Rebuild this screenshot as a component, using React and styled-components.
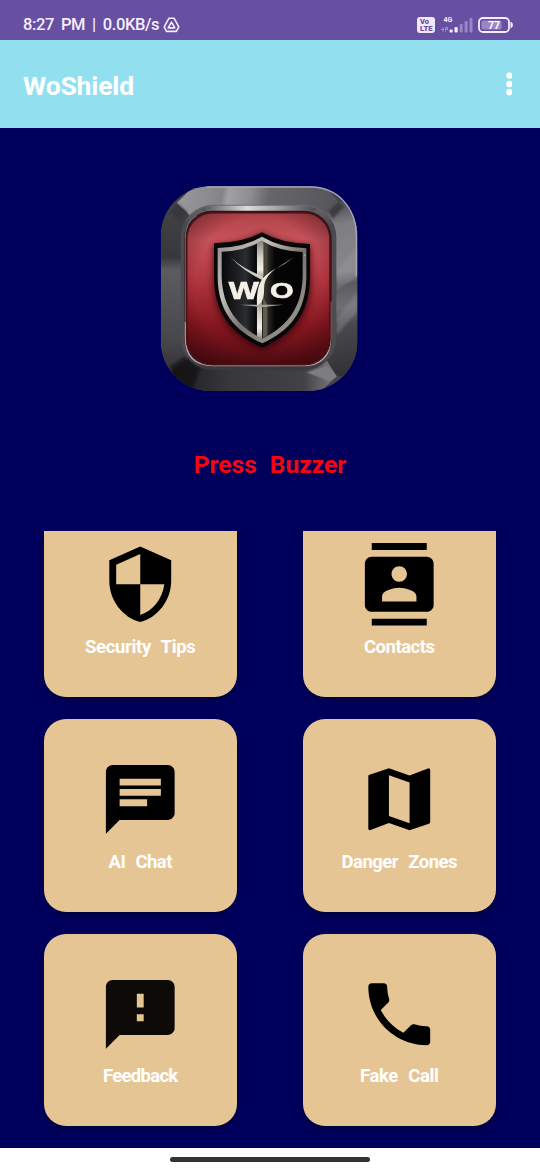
import React from 'react';
import styled, { createGlobalStyle } from 'styled-components';
import { MdSecurity, MdContacts, MdChat, MdMap, MdFeedback, MdPhone } from 'react-icons/md';

const GlobalStyle = createGlobalStyle`
  * { box-sizing: border-box; }
  body { margin: 0; font-family: Roboto, "Liberation Sans", sans-serif; }
`;

const Screen = styled.div`
  width: 540px;
  height: 1170px;
  display: flex;
  flex-direction: column;
  background: #00005c;
  overflow: hidden;
`;

const StatusBar = styled.div`
  flex: none;
  height: 40px;
  padding: 10px 27px 0 23px;
  display: flex;
  align-items: center;
  justify-content: space-between;
  background: #6750a2;
  color: #f5edff;
`;

const StatusGroup = styled.div`
  display: flex;
  align-items: center;
  gap: ${(p) => p.$gap}px;
`;

const StatusText = styled.span`
  font-size: 16.5px;
  font-weight: 500;
  line-height: 20px;
  letter-spacing: -0.4px;
  word-spacing: 3.3px;
  white-space: nowrap;
`;

const AppBar = styled.header`
  flex: none;
  height: 88px;
  padding: 3px 28px 0 23px;
  display: flex;
  align-items: center;
  justify-content: space-between;
  background: #92e0ef;
  color: #fff;
`;

const Title = styled.h1`
  margin: 0;
  font-size: 26.5px;
  font-weight: 700;
  line-height: 32px;
  letter-spacing: -0.15px;
`;

const MenuButton = styled.button`
  width: 6px;
  height: 24px;
  margin-bottom: 4px;
  padding: 0;
  border: 0;
  background: none;
  display: flex;
  svg { display: block; }
`;

const Buzzer = styled.section`
  flex: none;
  height: 403px;
  padding-top: 47px;
  display: flex;
  flex-direction: column;
  align-items: center;
`;

const BuzzerButton = styled.button`
  width: 220px;
  height: 225px;
  margin: 0 20px 0 0;
  padding: 0;
  border: 0;
  background: none;
  svg { display: block; }
`;

const BuzzerLabel = styled.p`
  margin: 50px 0 0;
  color: #f60410;
  font-size: 24.5px;
  font-weight: 700;
  line-height: 30px;
  word-spacing: 7px;
`;

const List = styled.main`
  flex: 1;
  min-height: 0;
  overflow: hidden;
  padding: 0 44px;
`;

const Grid = styled.div`
  margin-top: -26.75px;
  display: grid;
  grid-template-columns: repeat(2, 192.5px);
  column-gap: 66.5px;
  row-gap: 22.25px;
`;

const Card = styled.button`
  height: 192.5px;
  padding: 39px 0 0;
  border: 0;
  border-radius: 22px;
  display: flex;
  flex-direction: column;
  align-items: center;
  gap: 9px;
  background: #e6c594;
  box-shadow: 0 3px 5px rgba(0, 0, 20, 0.4);
  color: ${(p) => p.$tone};
  font-family: inherit;
  svg { display: block; flex: none; }
`;

const CardLabel = styled.span`
  color: #fff;
  font-size: 18.5px;
  font-weight: 700;
  line-height: 24px;
  letter-spacing: ${(p) => p.$tracking}px;
  word-spacing: 6px;
  white-space: nowrap;
`;

const NavBar = styled.footer`
  flex: none;
  height: 22px;
  background: #fff;
  display: flex;
  justify-content: center;
  align-items: center;
`;

const NavHandle = styled.div`
  width: 200px;
  height: 5px;
  border-radius: 3px;
  background: #333;
`;

const items = [
  { label: 'Security Tips', Icon: MdSecurity, tracking: -0.35 },
  { label: 'Contacts', Icon: MdContacts, tracking: -0.5 },
  { label: 'AI Chat', Icon: MdChat, tracking: -0.5 },
  { label: 'Danger Zones', Icon: MdMap, tracking: -0.5 },
  { label: 'Feedback', Icon: MdFeedback, tracking: -0.7, tone: '#0d0a08' },
  { label: 'Fake Call', Icon: MdPhone, tracking: -0.35 },
];

const DriveIcon = () => (
  <svg width="17" height="16" viewBox="0 0 17 16" fill="none" stroke="currentColor" strokeLinejoin="round">
    <path d="M6 1.2h5l4.8 8.6-2.4 4.6H3.5L1.2 9.8z" strokeWidth="1.6" />
    <path d="M8.5 5.2l3.3 5.7H5.2z" strokeWidth="1.6" />
  </svg>
);

const VolteIcon = () => (
  <svg width="18" height="16" viewBox="0 0 18 16">
    <rect width="18" height="16" rx="3" fill="#f1e8fb" />
    <g fill="#67509f" fontFamily="Roboto, sans-serif" fontWeight="900">
      <text x="3" y="6.8" fontSize="6.5" textLength="9" lengthAdjust="spacingAndGlyphs">Vo</text>
      <text x="3" y="14" fontSize="6.5" textLength="12.5" lengthAdjust="spacingAndGlyphs">LTE</text>
    </g>
  </svg>
);

const SignalIcon = () => (
  <svg width="33" height="18" viewBox="0 0 33 18" fill="#f5edff">
    <text x="3.5" y="6" fontFamily="Roboto, sans-serif" fontWeight="700" fontSize="7">4G</text>
    <path d="M1 13.5h3M3 11.5v4M5.5 15.5v-4h2v2h-2" fill="none" stroke="#a593c8" strokeWidth="1" />
    <rect x="9.5" y="13.5" width="3.2" height="3" rx="1" />
    <rect x="14.5" y="11" width="3.2" height="5.5" rx="1" />
    <g fill="#9a86c4">
      <rect x="19.7" y="8" width="3" height="8.5" rx="1" />
      <rect x="24.6" y="5" width="3" height="11.5" rx="1" />
      <rect x="29.5" y="2" width="3" height="14.5" rx="1" />
    </g>
  </svg>
);

const BatteryIcon = () => (
  <svg width="35" height="16" viewBox="0 0 35 16">
    <rect x="1" y="1" width="30" height="14" rx="4" fill="none" stroke="#f5edff" strokeWidth="1.8" />
    <rect x="3.5" y="3.5" width="20" height="9" rx="2" fill="#9a86c4" />
    <path d="M33 5.3c1.8.6 1.8 4.8 0 5.4z" fill="#f5edff" stroke="#f5edff" />
    <text x="16" y="11.8" textAnchor="middle" fill="#fff" fontFamily="Roboto, sans-serif" fontWeight="700" fontSize="10.5">77</text>
  </svg>
);

const DotsIcon = () => (
  <svg width="6" height="24" viewBox="0 0 6 24" fill="#fff">
    <circle cx="3.4" cy="3.6" r="3.2" />
    <circle cx="3.4" cy="12" r="3.2" />
    <circle cx="3.4" cy="20.2" r="3.2" />
  </svg>
);

const Emblem = () => (
  <svg width="220" height="225" viewBox="0 0 660 675">
    <defs>
      <linearGradient id="leftSide" x1="0" y1="0" x2="0" y2="1">
        <stop offset="0" stopColor="#48474c" />
        <stop offset="0.36" stopColor="#38373c" />
        <stop offset="0.42" stopColor="#5c5c60" />
        <stop offset="0.75" stopColor="#48484c" />
        <stop offset="1" stopColor="#252428" />
      </linearGradient>
      <linearGradient id="topSide" gradientUnits="userSpaceOnUse" x1="90" y1="60" x2="560" y2="140">
        <stop offset="0" stopColor="#98979b" />
        <stop offset="0.26" stopColor="#858488" />
        <stop offset="0.3" stopColor="#a1a0a5" />
        <stop offset="0.44" stopColor="#8d8c91" />
        <stop offset="0.55" stopColor="#67666b" />
        <stop offset="1" stopColor="#55545a" />
      </linearGradient>
      <linearGradient id="rightSide" gradientUnits="userSpaceOnUse" x1="560" y1="90" x2="640" y2="580">
        <stop offset="0" stopColor="#55545a" />
        <stop offset="0.12" stopColor="#7e7d82" />
        <stop offset="0.4" stopColor="#88878c" />
        <stop offset="0.48" stopColor="#5b5a5f" />
        <stop offset="0.62" stopColor="#717074" />
        <stop offset="0.72" stopColor="#4a494d" />
        <stop offset="1" stopColor="#333237" />
      </linearGradient>
      <linearGradient id="bottomSide" x1="0" y1="0" x2="1" y2="0">
        <stop offset="0" stopColor="#1d1c20" />
        <stop offset="0.35" stopColor="#38373a" />
        <stop offset="0.8" stopColor="#424145" />
        <stop offset="1" stopColor="#807f83" />
      </linearGradient>
      <linearGradient id="bezel" x1="0" y1="0" x2="0" y2="1">
        <stop offset="0" stopColor="#6c6b70" />
        <stop offset="0.12" stopColor="#4a494e" />
        <stop offset="0.5" stopColor="#4f4d51" />
        <stop offset="0.9" stopColor="#4d4a4e" />
        <stop offset="1" stopColor="#39373b" />
      </linearGradient>
      <linearGradient id="topLight" x1="0" y1="0" x2="1" y2="0">
        <stop offset="0" stopColor="#4c4b4f" />
        <stop offset="0.4" stopColor="#dedbdc" />
        <stop offset="0.65" stopColor="#a6a4a6" />
        <stop offset="1" stopColor="#4a494d" />
      </linearGradient>
      <linearGradient id="red" x1="0" y1="0" x2="0" y2="1">
        <stop offset="0" stopColor="#b1434a" />
        <stop offset="0.18" stopColor="#c8525a" />
        <stop offset="0.45" stopColor="#b0343e" />
        <stop offset="0.75" stopColor="#83161f" />
        <stop offset="1" stopColor="#520b12" />
      </linearGradient>
      <radialGradient id="vignette" cx="0.5" cy="0.48" r="0.72">
        <stop offset="0.62" stopColor="#200006" stopOpacity="0" />
        <stop offset="1" stopColor="#200006" stopOpacity="0.5" />
      </radialGradient>
      <linearGradient id="steel" x1="0" y1="0" x2="1" y2="1">
        <stop offset="0" stopColor="#8e8c8a" />
        <stop offset="0.3" stopColor="#c5c2bc" />
        <stop offset="0.55" stopColor="#77736e" />
        <stop offset="1" stopColor="#a6a29b" />
      </linearGradient>
      <linearGradient id="silver" x1="0" y1="0" x2="0" y2="1">
        <stop offset="0" stopColor="#858078" />
        <stop offset="0.45" stopColor="#d6d0c5" />
        <stop offset="0.75" stopColor="#f6f0e5" />
        <stop offset="1" stopColor="#8e8a83" />
      </linearGradient>
      <linearGradient id="field" x1="0" y1="0" x2="1" y2="0">
        <stop offset="0" stopColor="#08080a" />
        <stop offset="0.3" stopColor="#292c30" />
        <stop offset="0.42" stopColor="#08090a" />
        <stop offset="0.54" stopColor="#35332e" />
        <stop offset="0.66" stopColor="#050505" />
        <stop offset="1" stopColor="#030303" />
      </linearGradient>
      <filter id="shade" x="-20%" y="-20%" width="140%" height="140%">
        <feGaussianBlur stdDeviation="9" />
      </filter>
      <filter id="soften" x="-10%" y="-10%" width="120%" height="120%">
        <feGaussianBlur stdDeviation="3" />
      </filter>
      <clipPath id="outer"><rect x="33" y="34" width="589" height="614" rx="148" /></clipPath>
    </defs>

    <g clipPath="url(#outer)">
      <rect x="33" y="34" width="589" height="614" fill="#444348" />
      <path d="M20 20L80 82 150 150V540L66 588 20 650z" fill="url(#leftSide)" />
      <path d="M80 84L145 20H510L567 80 510 150H150z" fill="url(#topSide)" />
      <path d="M567 80L640 60V600L560 604 500 540V140z" fill="url(#rightSide)" />
      <path d="M66 588L130 540H520L560 604 500 660H100z" fill="url(#bottomSide)" />
      <g filter="url(#soften)">
        <path d="M80 84L111 111 94 140 62 112z" fill="#39383d" />
        <path d="M535 108L567 80 582 96 548 132z" fill="#3d3c41" />
        <path d="M560 285L622 215V305L560 345z" fill="#9b9a9f" opacity="0.35" />
        <path d="M560 430L622 350V410L560 480z" fill="#8c8b8e" opacity="0.45" />
        <path d="M60 575L104 545 150 580 130 640 80 640z" fill="#141316" opacity="0.7" />
      </g>
      <path d="M530 572L560 604 538 618 470 592z" fill="#7f7d81" />
    </g>
    <path d="M170 36H485C565 38 619 100 619 182V304" fill="none" stroke="#a5a4b8" strokeWidth="4" />

    <rect x="92" y="89" width="467" height="497" rx="98" fill="url(#bezel)" />
    <path d="M150 103Q172 92 195 92H460Q484 92 502 103L490 109H165z" fill="url(#topLight)" />
    <rect x="103" y="107" width="442" height="467" rx="84" fill="#29191d" />
    <path d="M106 440V486Q106 572 190 572H455Q542 572 542 488V380" fill="none" stroke="#b3abac" strokeWidth="4" />
    <path d="M106 440V190Q106 140 140 122" fill="none" stroke="#77727a" strokeWidth="3" />
    <rect x="110" y="113" width="430" height="456" rx="78" fill="url(#red)" />
    <rect x="110" y="113" width="430" height="456" rx="78" fill="url(#vignette)" stroke="#4a1016" strokeWidth="5" />

    <path d="M190 210Q275 205 337 174Q400 207 482 212V330C480 430 420 490 337 526C250 490 195 430 190 330z" fill="#25000a" opacity="0.7" filter="url(#shade)" />
    <path d="M192 205Q280 203 336 172Q393 205 480 207V310C478 422 423 480 337 518C250 480 194 422 192 310z" fill="#080607" />
    <path d="M203 219Q282 217 336 185Q391 218 469 220V308C467 410 420 467 337 505C254 467 205 410 203 308z" fill="url(#steel)" />
    <path d="M215 230Q284 228 336 198Q388 229 458 231V307C455 398 413 454 337 491C262 454 218 398 215 307z" fill="url(#field)" />

    <path d="M321 205L336 196 341 202V302L336 312 321 300z" fill="url(#silver)" />
    <path d="M341 202L353 208V292L341 304z" fill="#45423c" />
    <path d="M321 380L336 362V492L321 484z" fill="url(#silver)" />
    <path d="M339 365L352 390V480L339 490z" fill="#5e5b52" />
    <path d="M270 389H400L335 397z" fill="#a8a296" />
    <path d="M241 246Q278 281 336 303L344 319Q282 290 241 246z" fill="#d3cec4" />
    <path d="M431 246C400 270 379 277 360 296C330 329 352 350 334 382L321 392C319 348 326 325 340 308C361 284 397 277 431 246z" fill="#efe9df" />
    <g fill="#f5f0e8" stroke="#f5f0e8" strokeWidth="2" fontFamily='"Liberation Sans", sans-serif' fontWeight="700">
      <text x="236" y="371" fontSize="70" textLength="90" lengthAdjust="spacingAndGlyphs">W</text>
      <text x="360" y="370" fontSize="68" textLength="71" lengthAdjust="spacingAndGlyphs">O</text>
    </g>
    <circle cx="464" cy="241" r="2.5" fill="#8db5c4" />
  </svg>
);

export default function App() {
  return (
    <>
      <GlobalStyle />
      <Screen>
        <StatusBar>
          <StatusGroup $gap={4}>
            <StatusText>8:27 PM | 0.0KB/s</StatusText>
            <DriveIcon />
          </StatusGroup>
          <StatusGroup $gap={5}>
            <VolteIcon />
            <SignalIcon />
            <BatteryIcon />
          </StatusGroup>
        </StatusBar>
        <AppBar>
          <Title>WoShield</Title>
          <MenuButton aria-label="More options"><DotsIcon /></MenuButton>
        </AppBar>
        <Buzzer>
          <BuzzerButton aria-label="Buzzer"><Emblem /></BuzzerButton>
          <BuzzerLabel>Press Buzzer</BuzzerLabel>
        </Buzzer>
        <List>
          <Grid>
            {items.map(({ label, Icon, tracking, tone = '#000' }) => (
              <Card key={label} $tone={tone}>
                <Icon size={82.5} />
                <CardLabel $tracking={tracking}>{label}</CardLabel>
              </Card>
            ))}
          </Grid>
        </List>
        <NavBar><NavHandle /></NavBar>
      </Screen>
    </>
  );
}
